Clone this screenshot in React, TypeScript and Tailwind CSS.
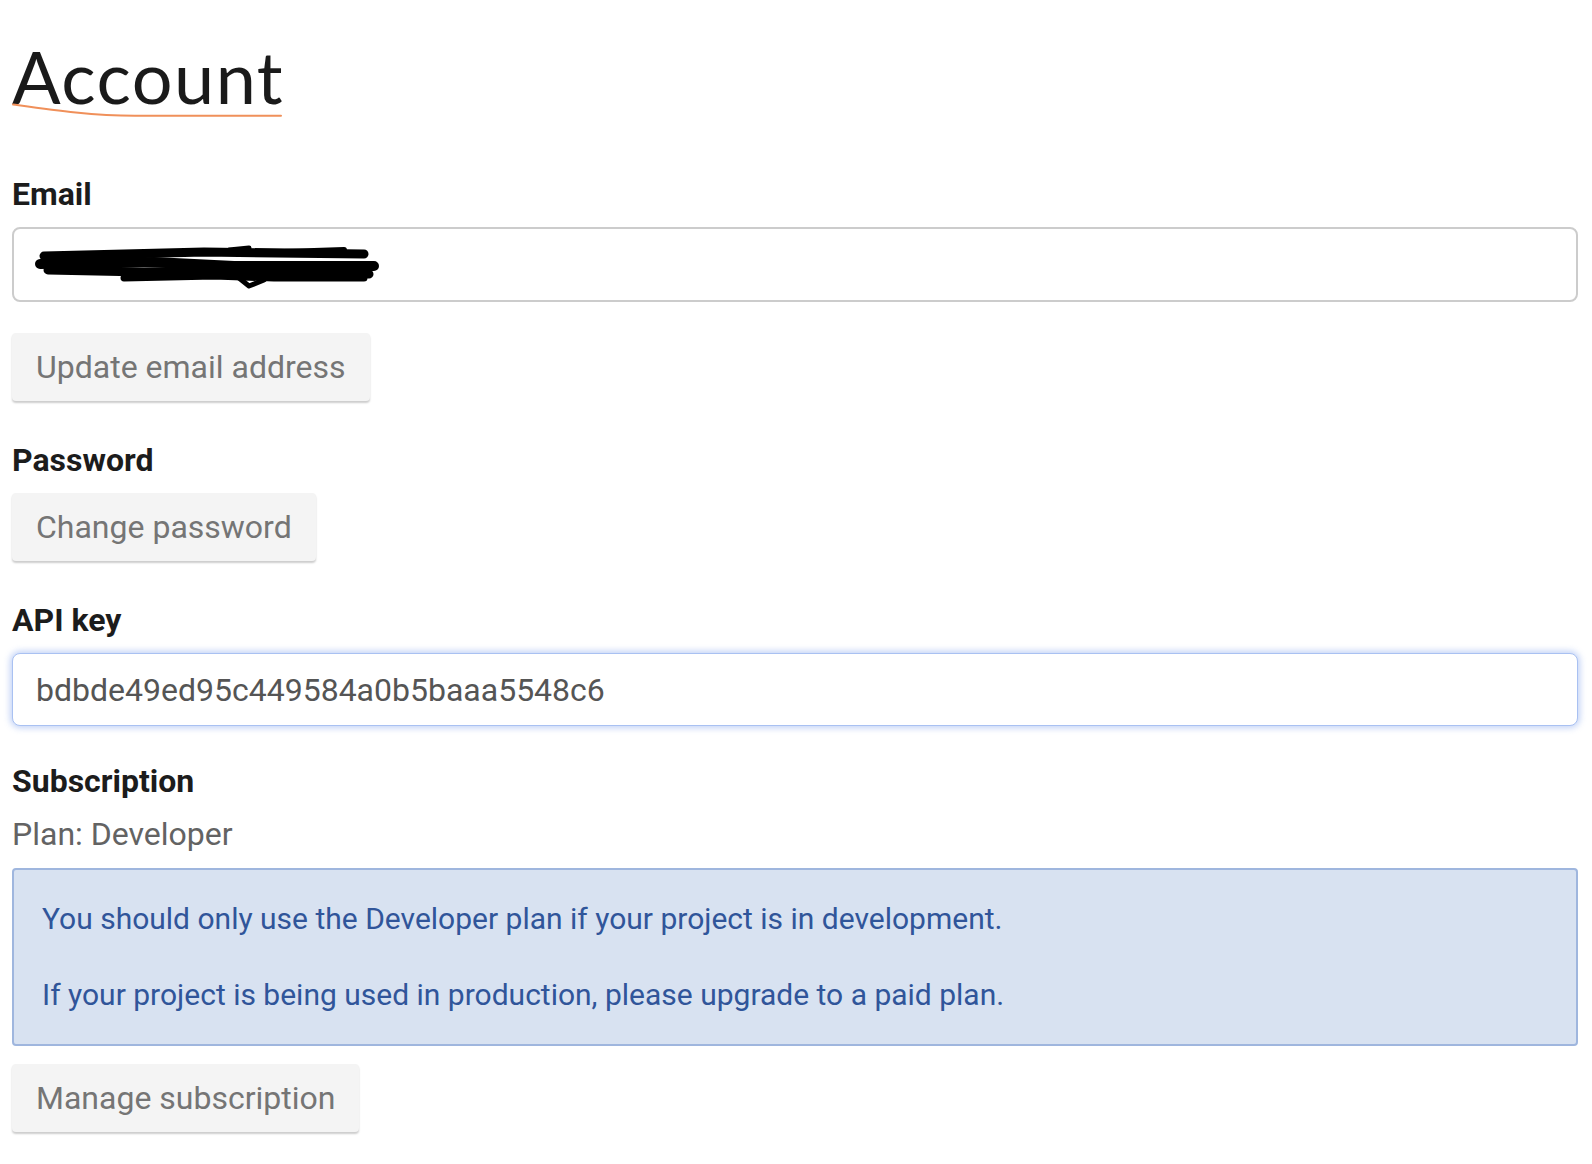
import React from 'react';

const Label = ({ children, className = '' }: { children: React.ReactNode; className?: string }) => (
  <div className={`text-[32px] leading-[36px] font-bold text-[#1c1c1c] ${className}`}>{children}</div>
);

const GrayButton = ({ children, className = '' }: { children: React.ReactNode; className?: string }) => (
  <button
    type="button"
    className={`h-[68px] px-[24px] rounded-[4px] bg-[#f4f4f4] text-[32px] text-[#757575] shadow-[0_2px_2px_rgba(0,0,0,0.2)] ${className}`}
  >
    {children}
  </button>
);

export default function App() {
  return (
    <div className="min-h-screen bg-white pl-[12px] pr-[14px] pt-[36px] font-['Roboto','Liberation_Sans',sans-serif]">
      <div className="relative inline-block">
        <h1 className="text-[72px] leading-[80px] font-normal text-[#1a1a1a] font-['Lato','Roboto',sans-serif] tracking-[1.5px]">
          Account
        </h1>
        <svg className="absolute left-0 top-[66px]" width="272" height="16" viewBox="0 0 272 16" fill="none">
          <path d="M1 2.5 C 40 8, 80 14, 125 13.8 L 269 13.8" stroke="#f0905a" strokeWidth="2" strokeLinecap="round" />
        </svg>
      </div>

      <Label className="mt-[60px]">Email</Label>
      <div className="mt-[15px] h-[75px] rounded-[8px] border-2 border-[#cccccc] bg-white px-[20px] flex items-center">
        {/* redacted address scribble */}
        <svg width="350" height="50" viewBox="0 0 350 50" fill="none">
          <g stroke="#000" strokeLinecap="round" strokeLinejoin="round">
            <path d="M10 16 L 170 12 L 330 14" strokeWidth="9" />
            <path d="M6 24 L 120 22 L 200 26 L 340 26" strokeWidth="10" />
            <path d="M14 30 L 110 32 L 200 30 L 335 34" strokeWidth="9" />
            <path d="M90 38 L 180 36 L 240 38 L 330 38" strokeWidth="7" />
            <path d="M195 10 L 215 8 M 205 38 L 215 46 L 230 40" strokeWidth="5" />
            <path d="M250 12 L 310 10" strokeWidth="6" />
          </g>
        </svg>
      </div>
      <GrayButton className="mt-[31px]">Update email address</GrayButton>

      <Label className="mt-[41px]">Password</Label>
      <GrayButton className="mt-[15px]">Change password</GrayButton>

      <Label className="mt-[41px]">API key</Label>
      <div className="mt-[15px] h-[73px] rounded-[8px] border border-[#a9c1f2] bg-white px-[23px] flex items-center text-[32px] text-[#555555] shadow-[0_0_6px_2px_rgba(120,155,235,0.45)]">
        bdbde49ed95c449584a0b5baaa5548c6
      </div>

      <Label className="mt-[37px]">Subscription</Label>
      <div className="mt-[17px] text-[32px] leading-[36px] text-[#636363]">Plan: Developer</div>

      <div className="mt-[16px] rounded-[4px] border-2 border-[#9fb6de] bg-[#d8e2f1] px-[28px] pt-[31px] pb-[31px] text-[30px] leading-[36px] text-[#30559a]">
        <p>You should only use the Developer plan if your project is in development.</p>
        <p className="mt-[40px]">If your project is being used in production, please upgrade to a paid plan.</p>
      </div>

      <GrayButton className="mt-[18px]">Manage subscription</GrayButton>
    </div>
  );
}
